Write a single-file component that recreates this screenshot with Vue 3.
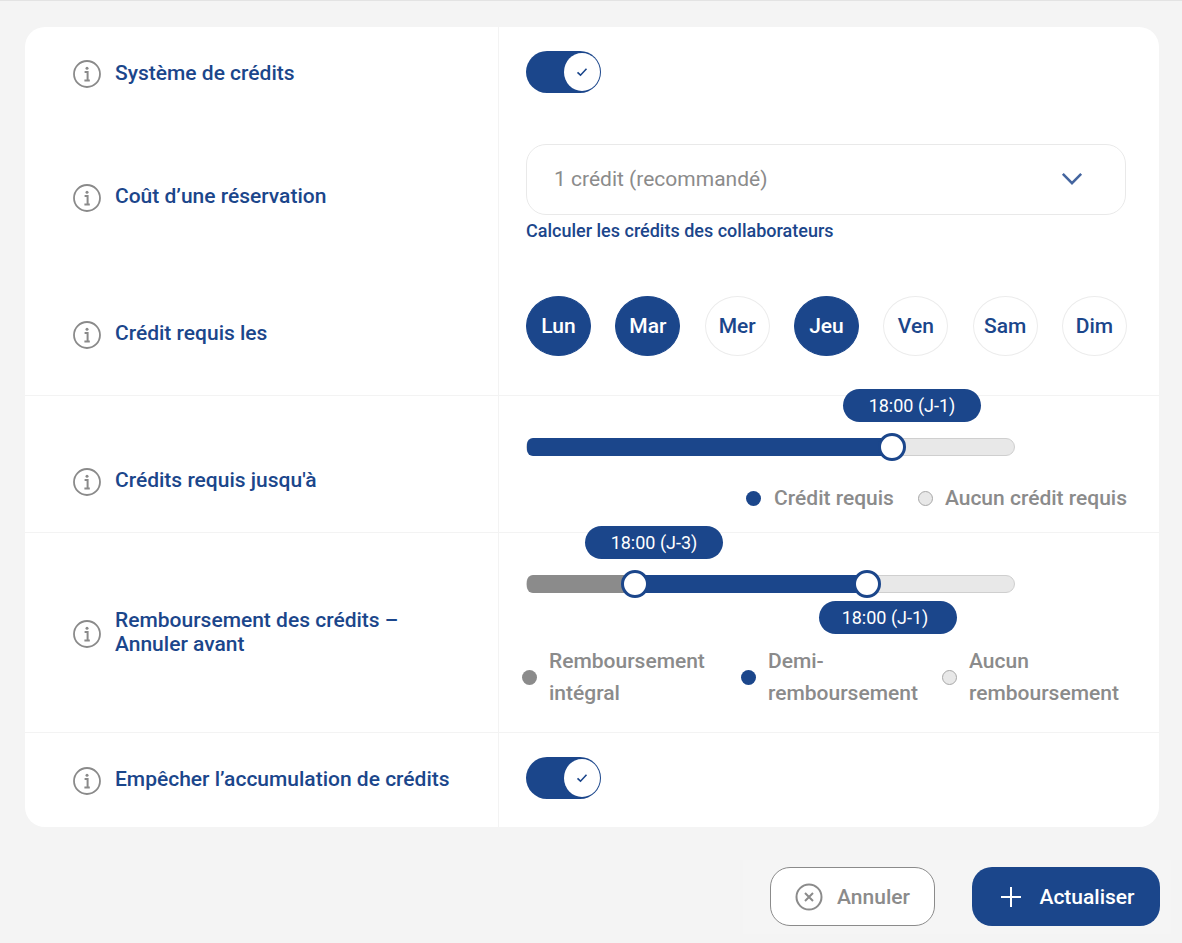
<template>
  <div class="page">
    <section class="card">
      <div class="row row-toggle-first">
        <div class="label">
          <svg class="info" viewBox="0 0 28 28"><circle cx="14" cy="14" r="13" /><circle class="dot" cx="14" cy="8.2" r="1.5" /><path d="M11.6 12h3v8.4M11.4 20.6h5.4" /></svg>
          <span>Système de crédits</span>
        </div>
        <div class="field">
          <div class="toggle">
            <span class="knob"><svg viewBox="0 0 12 12"><path d="M1.5 6.4l3 2.8 6-6.4" /></svg></span>
          </div>
        </div>
      </div>

      <div class="row row-cost">
        <div class="label">
          <svg class="info" viewBox="0 0 28 28"><circle cx="14" cy="14" r="13" /><circle class="dot" cx="14" cy="8.2" r="1.5" /><path d="M11.6 12h3v8.4M11.4 20.6h5.4" /></svg>
          <span>Coût d’une réservation</span>
        </div>
        <div class="field">
          <div class="select">
            <span>1 crédit (recommandé)</span>
            <svg viewBox="0 0 24 14"><path d="M2 2l10 10L22 2" /></svg>
          </div>
          <a class="calc">Calculer les crédits des collaborateurs</a>
        </div>
      </div>

      <div class="row row-days line">
        <div class="label">
          <svg class="info" viewBox="0 0 28 28"><circle cx="14" cy="14" r="13" /><circle class="dot" cx="14" cy="8.2" r="1.5" /><path d="M11.6 12h3v8.4M11.4 20.6h5.4" /></svg>
          <span>Crédit requis les</span>
        </div>
        <div class="field">
          <div class="days">
            <span v-for="d in days" :key="d.name" class="day" :class="{ on: d.on }">{{ d.name }}</span>
          </div>
        </div>
      </div>

      <div class="row row-until line">
        <div class="label">
          <svg class="info" viewBox="0 0 28 28"><circle cx="14" cy="14" r="13" /><circle class="dot" cx="14" cy="8.2" r="1.5" /><path d="M11.6 12h3v8.4M11.4 20.6h5.4" /></svg>
          <span>Crédits requis jusqu'à</span>
        </div>
        <div class="field">
          <div class="slider">
            <div class="fill blue" :style="{ left: 0, width: '75%' }"></div>
            <span class="thumb" :style="{ left: '75%' }"></span>
            <span class="bubble" :style="{ left: '316px', top: '-50px' }">18:00 (J-1)</span>
          </div>
          <div class="legend">
            <span class="key"><i class="blue"></i>Crédit requis</span>
            <span class="key last"><i class="empty"></i>Aucun crédit requis</span>
          </div>
        </div>
      </div>

      <div class="row row-refund line">
        <div class="label">
          <svg class="info" viewBox="0 0 28 28"><circle cx="14" cy="14" r="13" /><circle class="dot" cx="14" cy="8.2" r="1.5" /><path d="M11.6 12h3v8.4M11.4 20.6h5.4" /></svg>
          <span>Remboursement des crédits –<br>Annuler avant</span>
        </div>
        <div class="field">
          <div class="slider">
            <div class="fill grey" :style="{ left: 0, width: '22.1%' }"></div>
            <div class="fill blue square" :style="{ left: '22.1%', width: '47.7%' }"></div>
            <span class="thumb" :style="{ left: '22.1%' }"></span>
            <span class="thumb" :style="{ left: '69.8%' }"></span>
            <span class="bubble" :style="{ left: '58px', top: '-50px' }">18:00 (J-3)</span>
            <span class="bubble lower" :style="{ left: '292px', top: '25px' }">18:00 (J-1)</span>
          </div>
          <div class="legend wrap">
            <span class="key k1"><i class="grey"></i><span>Remboursement<br>intégral</span></span>
            <span class="key k2"><i class="blue"></i><span>Demi-<br>remboursement</span></span>
            <span class="key k3"><i class="empty"></i><span>Aucun<br>remboursement</span></span>
          </div>
        </div>
      </div>

      <div class="row row-last line">
        <div class="label">
          <svg class="info" viewBox="0 0 28 28"><circle cx="14" cy="14" r="13" /><circle class="dot" cx="14" cy="8.2" r="1.5" /><path d="M11.6 12h3v8.4M11.4 20.6h5.4" /></svg>
          <span>Empêcher l’accumulation de crédits</span>
        </div>
        <div class="field">
          <div class="toggle">
            <span class="knob"><svg viewBox="0 0 12 12"><path d="M1.5 6.4l3 2.8 6-6.4" /></svg></span>
          </div>
        </div>
      </div>
    </section>

    <footer class="actions">
      <button class="btn cancel">
        <svg viewBox="0 0 28 28"><circle cx="14" cy="14" r="12.5" /><path d="M10 10l8 8M18 10l-8 8" /></svg>
        Annuler
      </button>
      <button class="btn save">
        <svg viewBox="0 0 20 20"><path d="M10 0v20M0 10h20" /></svg>
        Actualiser
      </button>
    </footer>
  </div>
</template>

<script setup>
const days = [
  { name: 'Lun', on: true },
  { name: 'Mar', on: true },
  { name: 'Mer', on: false },
  { name: 'Jeu', on: true },
  { name: 'Ven', on: false },
  { name: 'Sam', on: false },
  { name: 'Dim', on: false },
]
</script>

<style>
html,
body {
  margin: 0;
  background: #f4f4f4;
}
</style>

<style scoped>
.page {
  box-sizing: border-box;
  height: 943px;
  overflow: hidden;
  padding: 26px 23px 0 25px;
  border-top: 1px solid #e3e3e3;
  background: #f4f4f4;
  font-family: Roboto, sans-serif;
  color: #1b468b;
}

.card {
  background: #fff;
  border-radius: 20px;
  height: 800px;
  overflow: hidden;
}

.row {
  display: grid;
  grid-template-columns: 473px 1fr;
  box-sizing: border-box;
}

.line {
  border-bottom: 1px solid #f3f3f3;
}

.row-toggle-first { height: 90px; }
.row-cost { height: 158px; }
.row-days { height: 121px; }
.row-until { height: 137px; }
.row-refund { height: 200px; }
.row-last { height: 94px; border-bottom: 0; }

.label {
  display: flex;
  align-items: center;
  gap: 14px;
  padding-left: 48px;
  font-size: 21px;
  font-weight: 500;
  line-height: 24px;
}

.row-toggle-first .label span { padding-top: 1px; }
.row-days .label { padding-bottom: 4px; }
.row-until .label { padding-top: 32px; }
.row-refund .label { padding-bottom: 1px; }
.row-last .label { padding-bottom: 3px; }

.info {
  flex: none;
  width: 28px;
  height: 28px;
  margin-top: 4px;
  fill: none;
  stroke: #8a8a8a;
  stroke-width: 1.8;
}

.info path {
  stroke-width: 2;
}

.info .dot {
  fill: #8a8a8a;
  stroke: none;
}

.field {
  border-left: 1px solid #f3f3f3;
  padding: 24px 32px 0 27px;
  min-width: 0;
}

.row-cost .field { padding-top: 27px; padding-right: 33px; }
.row-days .field { padding-top: 21px; }
.row-until .field,
.row-refund .field { padding-top: 42px; }
.row-last .field { padding-top: 24px; }

.toggle {
  box-sizing: border-box;
  width: 75px;
  height: 42px;
  border-radius: 21px;
  background: #1b468b;
  display: flex;
  justify-content: flex-end;
  align-items: center;
}

.knob {
  width: 36px;
  height: 38px;
  margin-right: 1px;
  border-radius: 50%;
  background: #fff;
  display: flex;
  align-items: center;
  justify-content: center;
}

.knob svg {
  width: 12px;
  height: 12px;
  fill: none;
  stroke: #1b468b;
  stroke-width: 1.6;
}

.select {
  box-sizing: border-box;
  height: 71px;
  border: 1px solid #e9e9e9;
  border-radius: 20px;
  padding: 0 41px 2px 27px;
  display: flex;
  align-items: center;
  justify-content: space-between;
  font-size: 21px;
  color: #8b8b8b;
}

.select svg {
  width: 22px;
  height: 13px;
  margin-right: 1px;
  fill: none;
  stroke: #44659f;
  stroke-width: 2.8;
}

.calc {
  display: block;
  margin-top: 4px;
  font-size: 18px;
  font-weight: 500;
  line-height: 24px;
}

.days {
  display: flex;
  justify-content: space-between;
}

.day {
  box-sizing: border-box;
  width: 65px;
  height: 60px;
  border: 1px solid #ececec;
  border-radius: 50%;
  display: flex;
  align-items: center;
  justify-content: center;
  font-size: 21px;
  font-weight: 500;
}

.day.on {
  background: #1b468b;
  border-color: #1b468b;
  color: #fff;
}

.slider {
  position: relative;
  box-sizing: border-box;
  width: 489px;
  height: 18px;
  border: 1px solid #cfcfcf;
  border-radius: 9px;
  background: #e8e8e8;
}

.fill {
  position: absolute;
  top: -1px;
  bottom: -1px;
  border-radius: 6px;
}

.fill.square {
  border-radius: 0;
}

.fill.blue { background: #1b468b; }
.fill.grey { background: #8b8b8b; }

.thumb {
  position: absolute;
  top: 50%;
  box-sizing: border-box;
  width: 28px;
  height: 28px;
  margin: -14px 0 0 -14px;
  border: 3px solid #1b468b;
  border-radius: 50%;
  background: #fff;
}

.bubble {
  position: absolute;
  box-sizing: border-box;
  width: 138px;
  height: 33px;
  border-radius: 17px;
  background: #1b468b;
  color: #fff;
  font-size: 18px;
  line-height: 33px;
  text-align: center;
}

.bubble.lower {
  padding-right: 6px;
}

.legend {
  display: flex;
  justify-content: flex-end;
  gap: 24px;
  margin-top: 26px;
  font-size: 21px;
  font-weight: 500;
  line-height: 32px;
  color: #8b8b8b;
}

.legend.wrap {
  justify-content: flex-start;
  margin-top: 52px;
  margin-left: -4px;
  gap: 0;
}

.key {
  display: flex;
  align-items: center;
  gap: 13px;
}

.key.last,
.legend.wrap .key {
  gap: 12px;
}

.k1 { width: 219px; }
.k2 { width: 201px; }

.key i {
  flex: none;
  box-sizing: border-box;
  width: 15px;
  height: 15px;
  border-radius: 50%;
}

.key i.blue { background: #1b468b; }
.key i.grey { background: #8b8b8b; }
.key i.empty {
  background: #e8e8e8;
  border: 1px solid #a8a8a8;
}

.actions {
  display: flex;
  justify-content: flex-end;
  gap: 37px;
  margin: 33px -12px 0 auto;
  padding: 7px 11px 8px 27px;
  width: fit-content;
  background: #f5f5f5;
}

.btn {
  box-sizing: border-box;
  height: 59px;
  border-radius: 20px;
  display: flex;
  align-items: center;
  justify-content: center;
  font-family: inherit;
  font-size: 21px;
  font-weight: 500;
  padding: 0;
}

.cancel {
  width: 165px;
  gap: 14px;
  background: #fff;
  border: 1px solid #8b8b8b;
  color: #8b8b8b;
}

.cancel svg {
  width: 28px;
  height: 28px;
  fill: none;
  stroke: #8b8b8b;
  stroke-width: 2;
}

.save {
  width: 188px;
  gap: 18px;
  padding-left: 4px;
  background: #1b468b;
  border: 0;
  color: #fff;
}

.save svg {
  width: 20px;
  height: 20px;
  fill: none;
  stroke: #fff;
  stroke-width: 2;
}
</style>
